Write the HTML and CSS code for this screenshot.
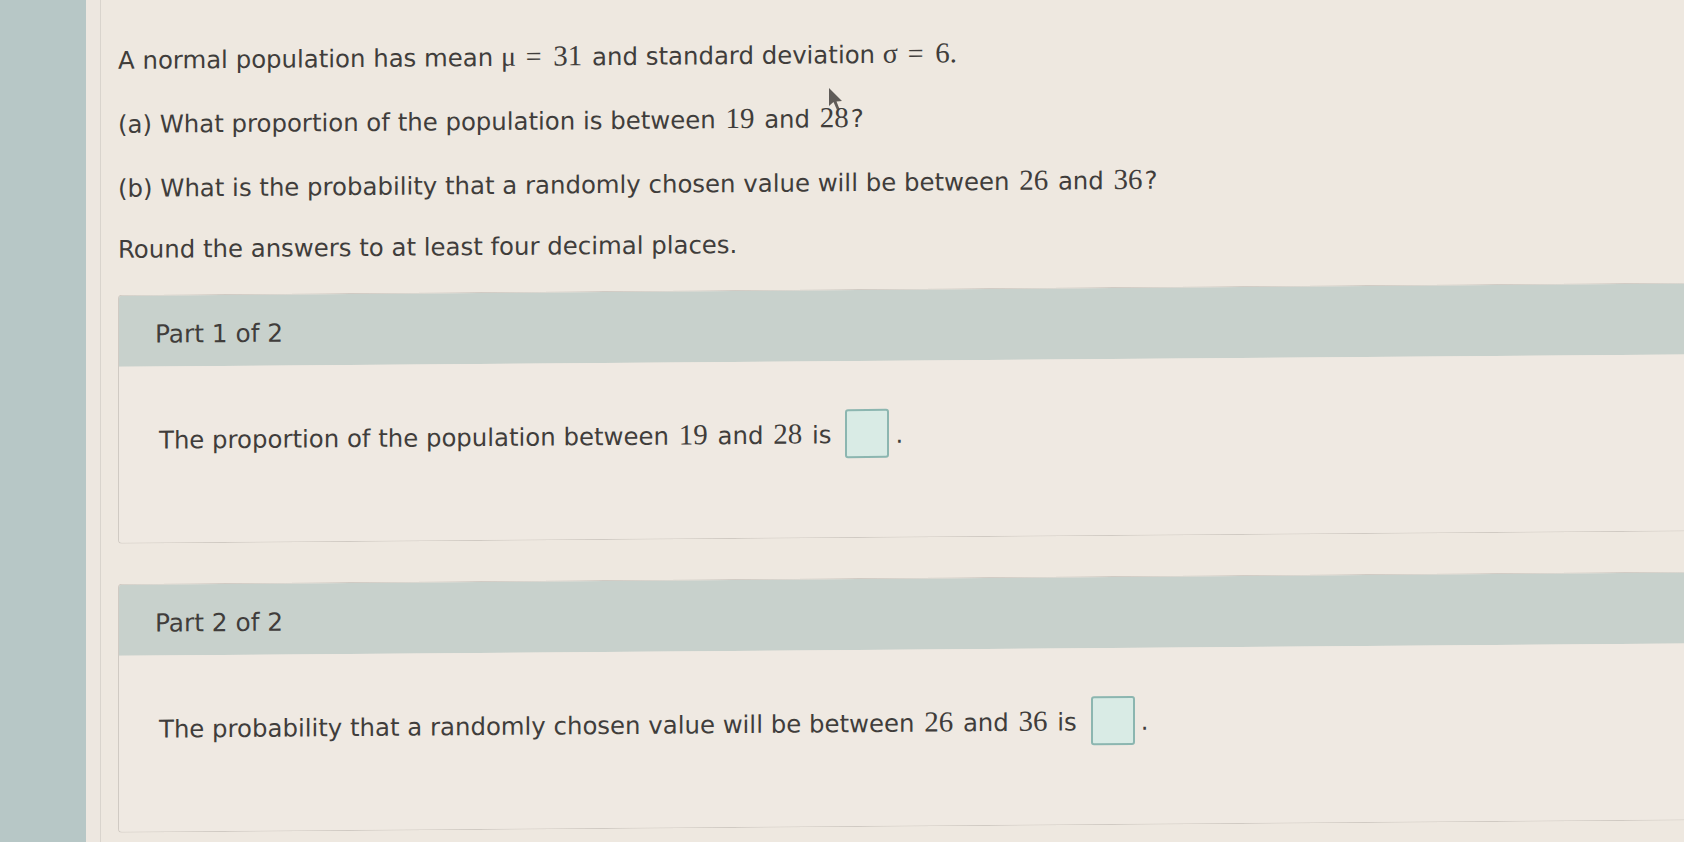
FILE: index.html
```html
<!DOCTYPE html>
<html>
<head>
<meta charset="utf-8">
<link rel="stylesheet" href="styles.css">
</head>
<body>
<div class="sidebar"></div>
<div class="gutter"></div>
<main class="content">
  <p class="q">A normal population has mean <span class="m">μ</span> <span class="m eq">=</span> <span class="num">31</span> and standard deviation <span class="m">σ</span> <span class="m eq">=</span> <span class="num">6.</span></p>
  <p class="q">(a) What proportion of the population is between <span class="num">19</span> and <span class="num">28</span>?</p>
  <p class="q">(b) What is the probability that a randomly chosen value will be between <span class="num">26</span> and <span class="num">36</span>?</p>
  <p class="q">Round the answers to at least four decimal places.</p>

  <section class="part">
    <div class="part-head">Part 1 of 2</div>
    <div class="part-body">
      <span>The proportion of the population between <span class="num">19</span> and <span class="num">28</span> is<span class="answer"></span>.</span>
    </div>
  </section>

  <section class="part">
    <div class="part-head">Part 2 of 2</div>
    <div class="part-body">
      <span>The probability that a randomly chosen value will be between <span class="num">26</span> and <span class="num">36</span> is<span class="answer"></span>.</span>
    </div>
  </section>
</main>
<svg class="cursor" width="18" height="28" viewBox="0 0 18 28">
  <path d="M1 1 L1 19 L5.5 15 L9 23 L11.5 22 L8.5 14.5 L14 14 Z" fill="#45423f" opacity="0.85"/>
</svg>
</body>
</html>
```

FILE: styles.css
```css
html, body {
  margin: 0;
  padding: 0;
}
body {
  width: 1684px;
  height: 842px;
  overflow: hidden;
  display: flex;
  background: #eee8e0;
  font-family: "DejaVu Sans", Verdana, sans-serif;
  color: #403d3b;
  position: relative;
}
.sidebar {
  width: 86px;
  flex: none;
  background: #b7c7c6;
}
.gutter {
  width: 14px;
  flex: none;
  background: #ede7e0;
  border-right: 1px solid #d9d4cd;
}
.content {
  flex: 1;
  padding: 41px 0 0 17px;
  transform: skewY(-0.45deg);
  transform-origin: 0 0;
}
.q {
  margin: 0 0 26px;
  font-size: 24.4px;
  line-height: 36px;
  white-space: nowrap;
}
.q:nth-child(3) {
  margin-bottom: 25px;
}
.q:nth-child(4) {
  margin-bottom: 27px;
}
.num, .m {
  font-family: "Liberation Serif", "Times New Roman", serif;
  font-size: 28px;
}
.num {
  font-size: 29px;
  padding: 0 2px;
}
.eq {
  margin: 0 2px;
}
.part {
  border: 1px solid #d0cac3;
  border-right: none;
  border-radius: 4px 0 0 4px;
  margin-bottom: 40px;
  overflow: hidden;
}
.part-head {
  height: 71px;
  box-sizing: border-box;
  padding: 5px 0 0 36px;
  display: flex;
  align-items: center;
  background: #c8d1cc;
  font-size: 24.8px;
}
.part-body {
  height: 176px;
  box-sizing: border-box;
  padding: 48px 0 0 40px;
  background: #efe9e2;
  font-size: 24.4px;
  line-height: 48px;
  white-space: nowrap;
}
.answer {
  display: inline-block;
  width: 40px;
  height: 45px;
  margin: 0 6px 0 14px;
  border: 2px solid #8cb6b0;
  border-radius: 3px;
  background: #d9ebe5;
  vertical-align: middle;
  position: relative;
  top: -3px;
}
.cursor {
  position: absolute;
  left: 828px;
  top: 87px;
}
```
